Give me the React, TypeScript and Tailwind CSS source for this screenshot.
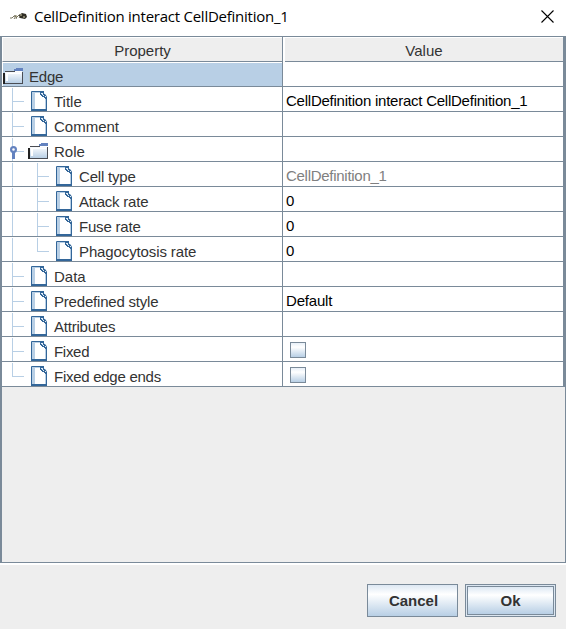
import type { ReactNode } from "react";

function FolderIcon() {
  return (
    <svg width="20" height="16" viewBox="0 0 20 16" shapeRendering="crispEdges" className="block shrink-0">
      <defs>
        <linearGradient id="folder" x1="0" y1="0" x2="0" y2="1">
          <stop offset="0" stopColor="#fff" />
          <stop offset=".4" stopColor="#e4edf6" />
          <stop offset="1" stopColor="#b8cfe5" />
        </linearGradient>
      </defs>
      <path d="M2 3h17v12H2z" fill="url(#folder)" />
      <path d="M3 5h2v8H3zM3 5h15v1H3z" fill="#fff" />
      <path d="M2 3h10v1H2zM2 15h18v1H2zM19 4h1v12h-1z" fill="#4a4d54" />
      <path d="M0 5h2v11H0z" fill="#222" />
      <path d="M11 3V1h2V0h7v3z" fill="#6382bf" />
    </svg>
  );
}

function FileIcon() {
  return (
    <svg width="16" height="20" viewBox="0 0 16 20" className="block shrink-0">
      <path d="M.5.5h11l4 5v14H.5z" fill="#fff" stroke="#336699" />
      <path d="M1 1h9v1H4v16H1z" fill="#b8cfe5" />
      <path d="M14 7h1v11h-1z" fill="#b8cfe5" />
      <path d="M0 18h16v2H0z" fill="#336699" />
      <path d="M9 0h4v2h1v2h1v2h1v2h-2v-1h-1V6h-2V5h-1V4H9z" fill="#336699" />
      <path d="M10 2h2v1h-2zM12 4h1v1h-1zM13 2h1v1h-1zM14 5h1v1h-1zM11 3h1v1h-1z" fill="#e4eef7" />
    </svg>
  );
}

type Row = { label: string; level: number; folder?: boolean; last?: boolean; spacing?: string; value?: ReactNode };

const check = (
  <span className="mt-[2px] ml-1 block h-4 w-4 border border-[#7a8a99] bg-linear-to-b from-[#e8f0f8] via-white via-30% to-[#b8cfe5]" />
);

const rows: Row[] = [
  { label: "Edge", level: 0, folder: true, spacing: "tracking-[-0.2px]" },
  { label: "Title", level: 1, value: <span className="tracking-[-0.24px]">CellDefinition interact CellDefinition_1</span> },
  { label: "Comment", level: 1 },
  { label: "Role", level: 1, folder: true },
  { label: "Cell type", level: 2, spacing: "tracking-[-0.2px]", value: <span className="tracking-[-0.28px] text-[#808080]">CellDefinition_1</span> },
  { label: "Attack rate", level: 2, spacing: "tracking-[-0.22px]", value: "0" },
  { label: "Fuse rate", level: 2, spacing: "tracking-[-0.2px]", value: "0" },
  { label: "Phagocytosis rate", level: 2, last: true, spacing: "tracking-[-0.12px]", value: "0" },
  { label: "Data", level: 1 },
  { label: "Predefined style", level: 1, spacing: "tracking-[-0.2px]", value: <span className="tracking-[-0.2px]">Default</span> },
  { label: "Attributes", level: 1, spacing: "tracking-[-0.22px]" },
  { label: "Fixed", level: 1, spacing: "tracking-[-0.3px]", value: check },
  { label: "Fixed edge ends", level: 1, last: true, spacing: "tracking-[-0.27px]", value: check },
];

function Guides({ row }: { row: Row }) {
  const width = row.level === 0 ? 0 : row.level === 1 ? 25 : 50;
  const x = row.level === 1 ? 9 : 34;
  return (
    <svg width={width} height="24" className="block shrink-0" fill="#b8cfe5">
      {row.level === 2 && <path d="M9 1h1v23H9z" />}
      {row.level > 0 && <rect x={x} y="1" width="1" height={row.last ? 14 : 23} />}
      {row.level > 0 && <rect x={x} y="14" width="12" height="1" />}
      {row.label === "Role" && (
        <g>
          <path d="M9 14h3v8H9z" fill="#6382bf" />
          <circle cx="10.5" cy="12.5" r="2.4" fill="#fff" stroke="#6382bf" strokeWidth="2.2" />
        </g>
      )}
    </svg>
  );
}

function TreeRow({ row }: { row: Row }) {
  return (
    <div className="flex h-[25px] border-b border-[#7a8a99] bg-white text-[15px]">
      <div className={"flex w-[280px] shrink-0 border-l border-white " + (row.level === 0 ? "bg-[#b8cfe5] shadow-[inset_0_1px_0_#fff]" : "")}>
        <Guides row={row} />
        <span className={"flex w-[26px] shrink-0 " + (row.folder ? "pt-[6px]" : "pl-[3px] pt-[4px]")}>
          {row.folder ? <FolderIcon /> : <FileIcon />}
        </span>
        <span className={"pt-[3px] leading-[24px] text-[#333] whitespace-nowrap " + (row.spacing ?? "")}>{row.label}</span>
      </div>
      <div className="flex grow items-center border-l border-[#7a8a99] pl-[3px] text-black whitespace-nowrap">
        {row.value === check ? check : <span className="pt-[4px]">{row.value}</span>}
      </div>
      <div className="-mb-px w-[2px] shrink-0 bg-[#7a8a99]" />
    </div>
  );
}

export default function App() {
  return (
    <div className="flex h-[629px] w-[566px] flex-col overflow-hidden bg-[#eee] font-['Liberation_Sans',Arial,sans-serif] text-[15px]">
      <header className="flex h-[36px] shrink-0 items-center bg-white pl-[9px] pr-[12px]">
        <svg width="18" height="8" viewBox="0 0 18 8" className="mr-[7px] mb-[4px]">
          <path d="M1 6h2l2-2h2L5 7M5 4h3L7 7M8 5l2-2h2l-2 3" fill="none" stroke="#77735d" />
          <path d="M10 3l3-2 4 1 1 3-2 2-5-1z" fill="#312e25" />
          <path d="M11 3h2M14 5h2M7 4h1" stroke="#d1cdaa" />
        </svg>
        <h1 className="mb-[5px] grow font-['Open_Sans','Noto_Sans',sans-serif] text-[15px] leading-5 tracking-[-0.25px] text-black whitespace-nowrap">
          CellDefinition interact CellDefinition_1
        </h1>
        <svg width="13" height="13" viewBox="0 0 13 13" className="mb-[3px]">
          <path d="M.5.5l12 12M12.500.5l-12 12" stroke="#000" strokeWidth="1.1" />
        </svg>
      </header>
      <main className="flex h-[527px] shrink-0 flex-col border-t border-r border-b border-l-2 border-[#7a8a99]">
        <div className="flex h-[25px] shrink-0 text-[#333]">
          <div className="flex w-[280px] items-center justify-center border-t border-b border-l border-t-white border-b-[#7a8a99] border-l-white pt-[3px]">Property</div>
          <div className="w-px bg-[#7a8a99]" />
          <div className="w-[2px] bg-white" />
          <div className="flex grow items-center justify-center border-t border-b border-t-white border-b-[#7a8a99] pt-[3px]">Value</div>
          <div className="w-[2px] bg-[#7a8a99]" />
        </div>
        {rows.map((row) => (
          <TreeRow key={row.label} row={row} />
        ))}
      </main>
      <div className="h-[2px] shrink-0 bg-white" />
      <footer className="flex justify-end gap-[7px] pt-[19px] pr-[10px] font-bold text-[#333]">
        <button className="h-[33px] w-[91px] border border-[#7a8a99] bg-linear-to-b from-[#dde8f3] via-white via-30% to-[#b8cfe5] pt-[2px] pl-[2px]">Cancel</button>
        <button className="h-[33px] w-[91px] border border-[#7a8a99] bg-[#dbe6f1] p-px">
          <span className="flex h-full items-center justify-center border border-[#7a8a99] bg-linear-to-b from-[#dde8f3] via-white via-30% to-[#b8cfe5] pt-[2px]">Ok</span>
        </button>
      </footer>
    </div>
  );
}
